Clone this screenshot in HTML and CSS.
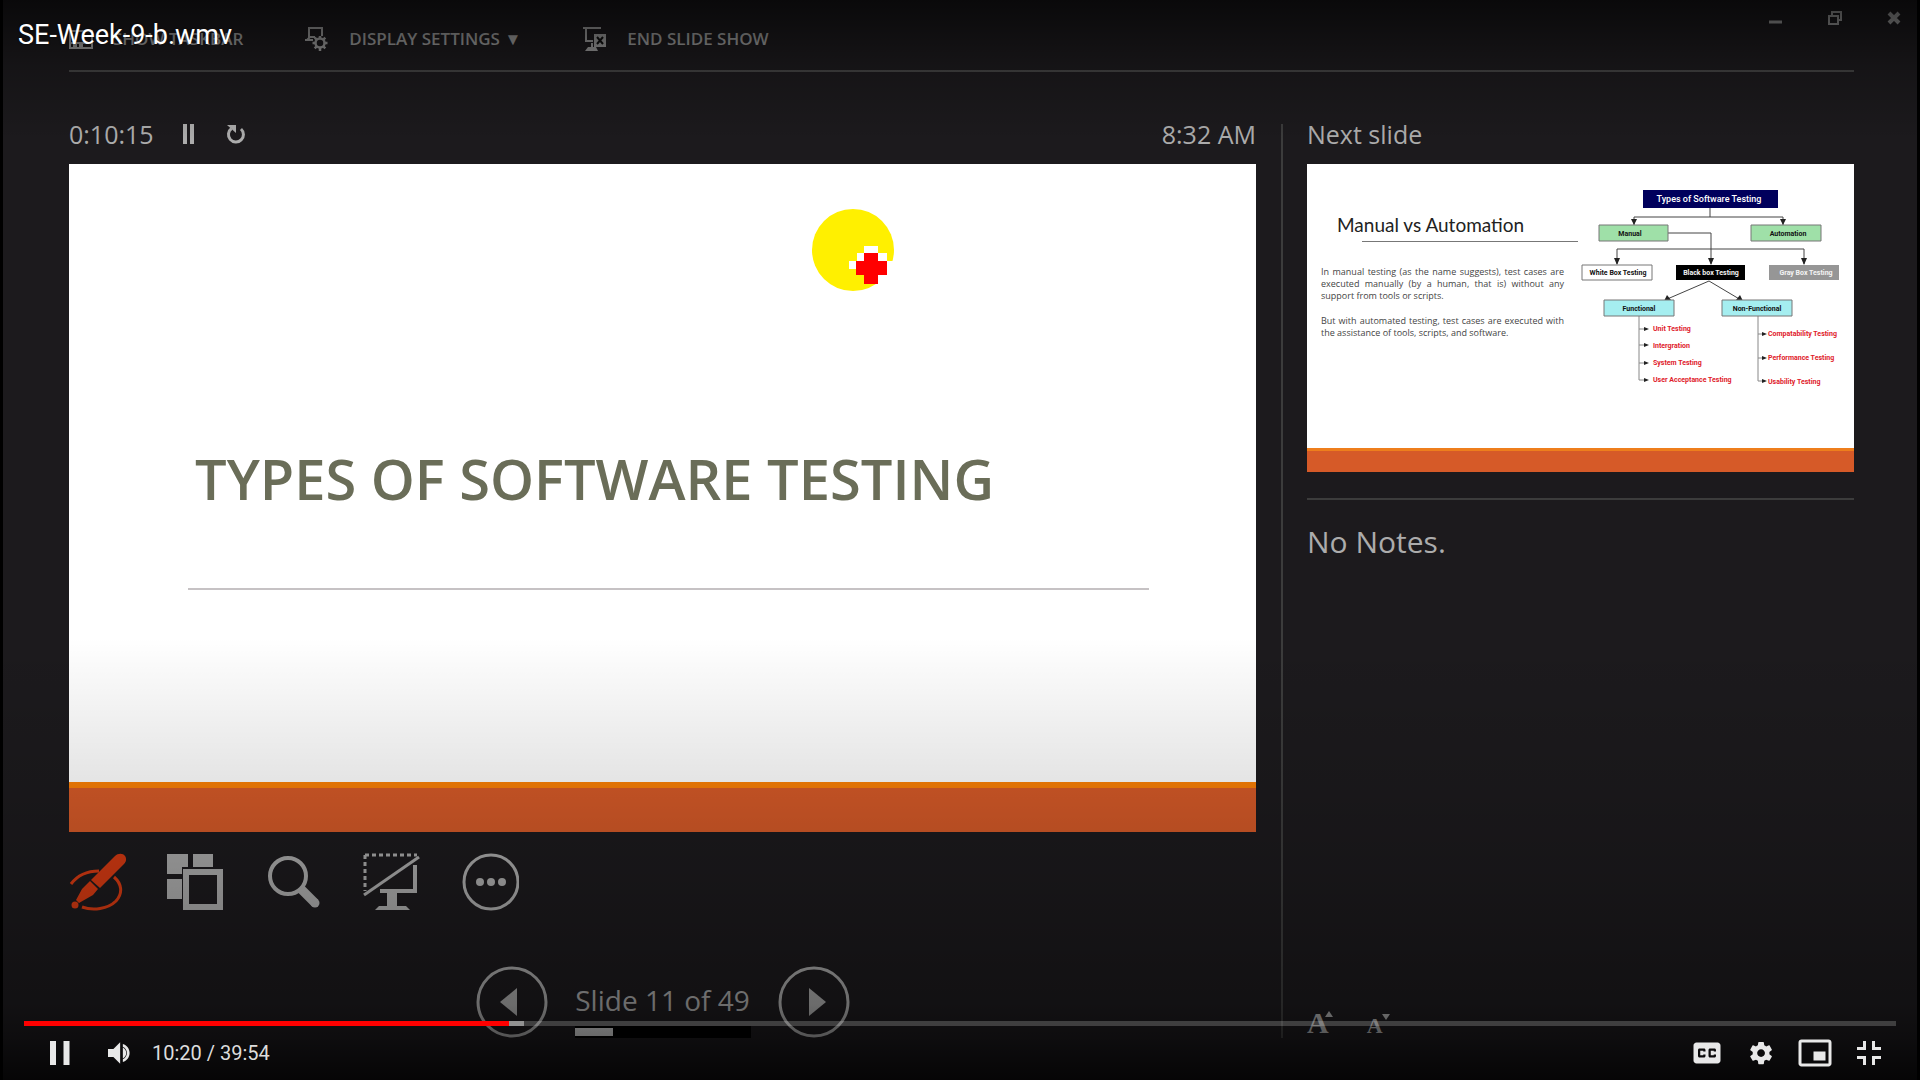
FILE: index.html
```html
<!DOCTYPE html>
<html lang="en">
<head>
<meta charset="utf-8">
<title>SE-Week-9-b.wmv</title>
<meta name="viewport" content="width=device-width, initial-scale=1">
<link rel="stylesheet" href="styles.css">
</head>
<body>
<div class="player">
  <main class="presenter">
    <header class="topbar">
      <nav class="menu">
        <button class="menu-item" type="button">
          <svg width="24" height="26" viewBox="0 0 24 26"><path d="M1 5h22v17H1z M1 17h22" fill="none" stroke="currentColor" stroke-width="2"/><path d="M4 18h4v3H4zM10 18h4v3h-4z" fill="currentColor"/></svg>
          <span>SHOW TASKBAR</span>
        </button>
        <button class="menu-item" type="button">
          <svg width="24" height="26" viewBox="0 0 24 26"><path d="M4 8V2h13v8M4 2v9h6M0 14h8M5 11l-3 3" fill="none" stroke="currentColor" stroke-width="2"/><circle cx="15" cy="17" r="4.500" fill="none" stroke="currentColor" stroke-width="2.500"/><path d="M15 10v3M15 21v4M7.500 17h3M19.500 17h3M9.700 11.700l2 2M18.300 20.300l2 2M20.300 11.700l-2 2M11.700 20.300l-2 2" stroke="currentColor" stroke-width="2.500"/></svg>
          <span>DISPLAY SETTINGS ▼</span>
        </button>
        <button class="menu-item" type="button">
          <svg width="24" height="26" viewBox="0 0 24 26"><path d="M0 2h18M3 2v13h7M9 17v6" fill="none" stroke="currentColor" stroke-width="2"/><path d="M5 21h8l2 4H2zM11 8h12v13H11z" fill="currentColor"/><path d="M14 11l6 7M20 11l-6 7" stroke="#0f0f0f" stroke-width="2"/></svg>
          <span>END SLIDE SHOW</span>
        </button>
      </nav>
      <div class="window-buttons">
        <button type="button" aria-label="Minimize"><svg width="16" height="16" viewBox="0 0 16 16"><path d="M1 12h13" stroke="currentColor" stroke-width="3"/></svg></button>
        <button type="button" aria-label="Restore"><svg width="16" height="16" viewBox="0 0 16 16"><path d="M2 6h9v8H2zM5 6V2h9v8h-3" fill="none" stroke="currentColor" stroke-width="2"/></svg></button>
        <button type="button" aria-label="Close"><svg width="16" height="16" viewBox="0 0 16 16"><path d="M3 3l10 10M13 3L3 13" stroke="currentColor" stroke-width="4"/></svg></button>
      </div>
    </header>

    <div class="workspace">
      <section class="current">
        <div class="status">
          <span class="timer">0:10:15</span>
          <button type="button" aria-label="Pause timer"><svg width="16" height="20" viewBox="0 0 16 20"><path d="M4 0v20M11 0v20" stroke="currentColor" stroke-width="4"/></svg></button>
          <button type="button" aria-label="Restart timer"><svg width="20" height="20" viewBox="0 0 20 20"><path d="M15 5a7.500 7.500 0 1 1-9.500-.5" fill="none" stroke="currentColor" stroke-width="3"/><path d="M1 1h9v8z" fill="currentColor"/></svg></button>
          <span class="clock">8:32 AM</span>
        </div>
        <article class="slide">
          <h1>TYPES OF SOFTWARE TESTING</h1>
          <svg class="pointer" viewBox="0 0 84 84"><circle cx="41" cy="42" r="41" fill="#fff000"/><path d="M52 38h14v7h9v8h7v14h-7v9H52v-9h-7v-6h-8V53h8v-8h7z" fill="#fff"/><path d="M52 45h14v8h9v14h-9v9H52v-9h-8V53h8z" fill="#f00"/></svg>
        </article>
        <div class="tools">
          <button type="button" class="pen" aria-label="Pen and laser tools"><svg width="58" height="58" viewBox="0 0 58 58"><path d="M2 31C8 23 18 18 30 18M45 24c8 7 9 16 2 24-8 8-23 10-34 6" fill="none" stroke="currentColor" stroke-width="3"/><path d="M46 3c3-3 8-3 10 0s1 6-1 8L31 35l-9-8zM21 28l8 8-5 6-14 8-3-3 6-11z" fill="currentColor"/><circle cx="6" cy="52" r="3.500" fill="currentColor"/></svg></button>
          <button type="button" aria-label="See all slides"><svg width="58" height="58" viewBox="0 0 58 58"><path d="M0 1h21v13h-6v7H0zM26 1h20v13H26zM0 26h15v20H0z" fill="currentColor"/><path d="M19 19h34v35H19z" fill="none" stroke="currentColor" stroke-width="6"/></svg></button>
          <button type="button" aria-label="Zoom into the slide"><svg width="58" height="58" viewBox="0 0 58 58"><circle cx="23" cy="23" r="18" fill="none" stroke="currentColor" stroke-width="4"/><path d="M36 36l14 14" stroke="currentColor" stroke-width="9"/><circle cx="50" cy="50" r="4.500" fill="currentColor"/></svg></button>
          <button type="button" aria-label="Black or unblack slide show"><svg width="58" height="58" viewBox="0 0 58 58"><path d="M2 2h52M2 2v36" fill="none" stroke="currentColor" stroke-width="3" stroke-dasharray="4 3"/><path d="M1 42L56 4" stroke="currentColor" stroke-width="3"/><path d="M52 12v26H17" fill="none" stroke="currentColor" stroke-width="4"/><path d="M24 39h10v14h9l4 4H12l4-4h8z" fill="currentColor"/></svg></button>
          <button type="button" aria-label="More options"><svg width="58" height="58" viewBox="0 0 58 58"><circle cx="30" cy="29" r="27" fill="none" stroke="currentColor" stroke-width="3"/><circle cx="19" cy="29" r="4" fill="currentColor"/><circle cx="30" cy="29" r="4" fill="currentColor"/><circle cx="41" cy="29" r="4" fill="currentColor"/></svg></button>
        </div>
        <div class="pager">
          <button type="button" aria-label="Previous slide"><svg width="72" height="72" viewBox="0 0 72 72"><circle cx="36" cy="36" r="34" fill="none" stroke="currentColor" stroke-width="3"/><path d="M24 36l17-14v28z" fill="currentColor"/></svg></button>
          <div class="position">
            <span>Slide 11 of 49</span>
            <div class="meter"><div class="meter-fill"></div></div>
          </div>
          <button type="button" aria-label="Next slide"><svg width="72" height="72" viewBox="0 0 72 72"><circle cx="36" cy="36" r="34" fill="none" stroke="currentColor" stroke-width="3"/><path d="M48 36L31 22v28z" fill="currentColor"/></svg></button>
        </div>
      </section>

      <aside class="side">
        <h2>Next slide</h2>
        <article class="preview">
          <div class="preview-text">
            <h3>Manual vs Automation</h3>
            <p>In manual testing (as the name suggests), test cases are executed manually (by a human, that is) without any support from tools or scripts.</p>
            <p>But with automated testing, test cases are executed with the assistance of tools, scripts, and software.</p>
          </div>
          <svg class="diagram" viewBox="0 0 279 220" role="img" aria-label="Types of software testing">
            <g fill="none" stroke="#444" stroke-width="1">
              <path d="M135 36v9M59 53v-8h149v8M93 61h43v31M42 92V77h187v15M134 109l-44 19M134 109l32 19"/>
              <path d="M64 144v64h6M64 157h6M64 173h6M64 191h6M183 144v65h5M183 162h5M183 186h5" stroke="#888"/>
            </g>
            <path d="M56 47h6l-3 6zM205 47h6l-3 6zM39 86h6l-3 7zM133 86h6l-3 7zM226 86h6l-3 7zM89 129l3-6 4 5zM168 129l-7-1 4-5zM69 155l5 2-5 2zM69 171l5 2-5 2zM69 189l5 2-5 2zM69 206l5 2-5 2zM187 160l5 2-5 2zM187 184l5 2-5 2zM187 207l5 2-5 2z" fill="#222"/>
            <path d="M68 18h135v18H68z" fill="#00005c"/>
            <g stroke="#777"><path d="M24 53h69v16H24zM176 53h70v16h-70z" fill="#9fe0a8"/><path d="M7 93h70v15H7z" fill="#fff"/><path d="M29 128h70v16H29zM147 128h70v16h-70z" fill="#a5eef0"/></g>
            <path d="M101 93h69v15h-69z" fill="#000"/><path d="M194 93h70v15h-70z" fill="#969696"/>
            <g text-anchor="middle" class="node">
              <text x="134" y="30" class="root">Types of Software Testing</text>
              <text x="55" y="64">Manual</text><text x="213" y="64">Automation</text>
              <text x="43" y="103">White Box Testing</text><text x="136" y="103" class="light">Black box Testing</text><text x="231" y="103" class="light">Gray Box Testing</text>
              <text x="64" y="139">Functional</text><text x="182" y="139">Non-Functional</text>
            </g>
            <g class="node leaf">
              <text x="78" y="159">Unit Testing</text><text x="78" y="176">Intergration</text><text x="78" y="193">System Testing</text><text x="78" y="210">User Acceptance Testing</text>
              <text x="193" y="164">Compatability Testing</text><text x="193" y="188">Performance Testing</text><text x="193" y="212">Usability Testing</text>
            </g>
          </svg>
        </article>
        <p class="notes">No Notes.</p>
        <div class="font-size">
          <button type="button" class="larger" aria-label="Make the text larger">A<svg width="8" height="6" viewBox="0 0 8 6"><path d="M0 6l4-6 4 6z" fill="currentColor"/></svg></button>
          <button type="button" class="smaller" aria-label="Make the text smaller">A<svg width="8" height="6" viewBox="0 0 8 6"><path d="M0 0h8L4 6z" fill="currentColor"/></svg></button>
        </div>
      </aside>
    </div>
  </main>

  <div class="shade"></div>
  <div class="video-title">SE-Week-9-b.wmv</div>
  <div class="chrome">
    <div class="seek"><div class="loaded"></div><div class="played"></div></div>
    <div class="controls">
      <button type="button" aria-label="Pause"><svg width="54" height="54" viewBox="0 0 36 36"><path d="M12 26h4V10h-4zM21 26h4V10h-4z" fill="currentColor"/></svg></button>
      <button type="button" class="volume" aria-label="Mute"><svg width="54" height="54" viewBox="0 0 36 36"><path d="M8 21h4l5 5V10l-5 5H8zM19 14v8c1.480-.68 2.500-2.230 2.500-4s-1.020-3.260-2.500-4zM19 11.290c2.890.86 5 3.540 5 6.710s-2.110 5.850-5 6.710v-2.060c1.720-.77 3-2.570 3-4.650s-1.280-3.880-3-4.650z" fill="currentColor" transform="translate(.8 1.800) scale(.9)"/></svg></button>
      <span class="time">10:20 / 39:54</span>
      <div class="right">
        <button type="button" aria-label="Subtitles"><svg width="54" height="54" viewBox="0 0 36 36"><path d="M11 11c-1.100 0-2 .9-2 2v10c0 1.100.9 2 2 2h14c1.100 0 2-.9 2-2V13c0-1.100-.9-2-2-2zM17 17h-1.500v-.5h-2v3h2V19H17v1c0 .55-.45 1-1 1h-3c-.55 0-1-.45-1-1v-4c0-.55.45-1 1-1h3c.55 0 1 .45 1 1zM24 17h-1.500v-.5h-2v3h2V19H24v1c0 .55-.45 1-1 1h-3c-.55 0-1-.45-1-1v-4c0-.55.45-1 1-1h3c.55 0 1 .45 1 1z" fill="currentColor" fill-rule="evenodd"/></svg></button>
        <button type="button" aria-label="Settings"><svg width="54" height="54" viewBox="0 0 36 36"><path d="M23.940 18.780c.03-.25.05-.51.05-.78s-.02-.52-.05-.78l1.680-1.320c.15-.12.19-.33.090-.51l-1.600-2.760c-.09-.17-.31-.24-.48-.17l-1.990.8c-.41-.32-.86-.58-1.350-.78l-.3-2.120c-.02-.19-.19-.33-.39-.33h-3.200c-.2 0-.36.14-.39.33l-.3 2.120c-.48.2-.93.47-1.350.78l-1.990-.8c-.18-.07-.39 0-.48.17l-1.600 2.760c-.1.17-.05.39.090.51l1.680 1.320c-.03.25-.05.52-.05.78s.02.52.05.78l-1.680 1.320c-.15.12-.19.33-.09.51l1.600 2.760c.09.17.31.24.48.17l1.990-.8c.41.32.86.58 1.350.78l.3 2.120c.02.19.19.33.39.33h3.200c.2 0 .36-.14.39-.33l.3-2.120c.48-.2.93-.47 1.350-.78l1.990.8c.18.07.39 0 .48-.17l1.600-2.760c.09-.17.05-.39-.09-.51zM18 20.800c-1.540 0-2.800-1.260-2.800-2.800s1.260-2.800 2.800-2.800 2.800 1.260 2.800 2.800-1.260 2.800-2.800 2.800z" fill="currentColor" transform="translate(1.300 1.300) scale(.93)"/></svg></button>
        <button type="button" aria-label="Miniplayer"><svg width="54" height="54" viewBox="0 0 36 36"><path d="M25 17h-8v6h8zM29 25V10.980C29 9.880 28.100 9 27 9H9c-1.100 0-2 .88-2 1.980V25c0 1.100.9 2 2 2h18c1.100 0 2-.9 2-2zM27 25.020H9V10.970h18z" fill="currentColor" fill-rule="evenodd"/></svg></button>
        <button type="button" aria-label="Exit full screen"><svg width="54" height="54" viewBox="0 0 36 36"><path d="M14 14h-4v2h6v-6h-2zM22 14v-4h-2v6h6v-2zM20 26h2v-4h4v-2h-6zM10 22h4v4h2v-6h-6z" fill="currentColor"/></svg></button>
      </div>
    </div>
  </div>
</div>
</body>
</html>
```
FILE: styles.css
```css
* { box-sizing: border-box; }

body {
  margin: 0;
  background: #000;
  color: #acacac;
  font-family: "Open Sans", "Noto Sans", sans-serif;
}

h1, h2, h3, p { margin: 0; font-weight: 400; }

button {
  display: flex;
  padding: 0;
  border: 0;
  background: none;
  color: inherit;
  font: inherit;
}

svg { display: block; flex: none; }

.player {
  position: relative;
  display: flex;
  min-height: 100vh;
  padding: 0 3px;
  overflow: hidden;
}

.presenter {
  flex: 1;
  display: flex;
  flex-direction: column;
  padding: 0 63px 42px 66px;
  background: #1c1a1d;
}

/* Top menu */
.topbar {
  display: flex;
  justify-content: space-between;
  height: 72px;
  border-bottom: 2px solid #444;
}

.menu { display: flex; align-items: center; gap: 62px; padding-top: 7px; }

.menu-item {
  align-items: center;
  gap: 20px;
  color: #a0a0a0;
  font-size: 17px;
  font-weight: 600;
  line-height: 26px;
  white-space: nowrap;
}

.window-buttons {
  display: flex;
  gap: 43px;
  height: 36px;
  align-items: center;
  margin-right: -48px;
  color: #a0a0a0;
}

/* Slide area */
.workspace {
  flex: 1;
  display: grid;
  grid-template-columns: 1187fr 573fr;
  column-gap: 25px;
  padding-top: 52px;
}

.current {
  display: flex;
  flex-direction: column;
  min-width: 0;
}

.status {
  display: flex;
  align-items: center;
  height: 40px;
  padding-bottom: 20px;
  font-size: 25px;
  line-height: 24px;
}

.timer { margin-right: 27px; }
.status button + button { margin-left: 29px; }
.clock { margin-left: auto; }

.slide {
  position: relative;
  aspect-ratio: 1187 / 668;
  padding: 278px 107px 0 119px;
  border-bottom: 44px solid #d65a28;
  background: linear-gradient(#fb8005, #fb8005) bottom / 100% 6px no-repeat #fff;
}

.slide h1 {
  margin-left: 7px;
  color: #6a6d58;
  font-size: 56px;
  font-weight: 600;
  line-height: 72px;
  white-space: nowrap;
}

.slide::after {
  content: "";
  display: block;
  height: 2px;
  margin-top: 74px;
  background: #c6c2c4;
}

.pointer {
  position: absolute;
  top: 44px;
  left: 743px;
  width: 84px;
  height: 84px;
}

.tools { display: flex; gap: 40px; padding-top: 21px; }
.tools button { color: #ababab; }
.tools .pen { color: #d63a12; }

.pager {
  display: flex;
  justify-content: center;
  gap: 27px;
  margin-top: auto;
  color: #a8a8a8;
}

.position {
  width: 176px;
  padding-top: 18px;
  font-size: 28px;
  line-height: 32px;
  text-align: center;
  white-space: nowrap;
}

.meter { height: 12px; margin-top: 10px; padding: 2px 0; background: #000; }
.meter-fill { width: 22%; height: 8px; background: #d0d0d0; }

/* Next slide and notes */
.side {
  display: flex;
  flex-direction: column;
  min-width: 0;
  padding-left: 24px;
  border-left: 2px solid #3c3c3c;
}

.side h2 { height: 40px; font-size: 25px; line-height: 20px; }

.preview {
  display: grid;
  grid-template-columns: 268fr 279fr;
  aspect-ratio: 547 / 308;
  border-bottom: 21px solid #d65a28;
  background: linear-gradient(#ee7e1c, #ee7e1c) bottom / 100% 3px no-repeat #fff;
}

.preview-text { padding: 48px 0 0 14px; color: #444; }

.preview h3 {
  margin-right: -3px;
  margin-bottom: 24px;
  padding: 0 0 4px 16px;
  color: #222;
  font-family: Lato, sans-serif;
  font-size: 19px;
  line-height: 26px;
  white-space: nowrap;
  background: linear-gradient(#777, #777) right bottom / 216px 1px no-repeat;
}

.preview p {
  width: 243px;
  margin-bottom: 13px;
  font-size: 9px;
  line-height: 12px;
  text-align: justify;
}

.diagram { width: 100%; margin-top: 8px; }
.node { font: 700 7px Roboto, sans-serif; fill: #111; }
.node .root { font-size: 9px; font-weight: 500; fill: #fff; }
.node .light { fill: #f4f4f4; }
.leaf { fill: #e0202a; }

.notes {
  margin-top: 26px;
  padding-top: 22px;
  border-top: 2px solid #3c3c3c;
  font-size: 30px;
  line-height: 40px;
}

.font-size {
  display: flex;
  align-items: baseline;
  gap: 34px;
  margin-top: auto;
  font-family: "Liberation Serif", serif;
  font-weight: 700;
}

.font-size svg { margin-left: -4px; }
.larger { font-size: 30px; line-height: 24px; }
.smaller { font-size: 22px; line-height: 24px; }
.smaller svg { margin-left: -1px; }

/* Player overlay */
.shade {
  position: absolute;
  inset: 0;
  background:
    linear-gradient(rgba(0, 0, 0, .65), rgba(0, 0, 0, .25) 6%, transparent 13%),
    linear-gradient(transparent 59%, rgba(0, 0, 0, .1) 72%, rgba(0, 0, 0, .2) 82%, rgba(0, 0, 0, .36) 93%, rgba(0, 0, 0, .5) 96%, rgba(0, 0, 0, .8));
  pointer-events: none;
}

.video-title {
  position: absolute;
  top: 17px;
  left: 18px;
  color: #fff;
  font: 27px/36px Roboto, sans-serif;
  text-shadow: 0 0 2px rgba(0, 0, 0, .5);
}

.chrome {
  position: absolute;
  right: 24px;
  bottom: 0;
  left: 24px;
  color: #e8e8e8;
}

.seek { display: grid; height: 5px; background: rgba(255, 255, 255, .2); }
.seek > div { grid-area: 1 / 1; }
.loaded { width: 26.7%; background: #929292; }
.played { width: 25.9%; background: #f00; }

.controls { display: flex; align-items: center; height: 54px; padding-left: 8px; }
.volume { margin-left: 10px; }
.time { margin-left: 2px; font: 20px/54px Roboto, sans-serif; color: #ddd; }
.right { display: flex; margin-left: auto; }
```
